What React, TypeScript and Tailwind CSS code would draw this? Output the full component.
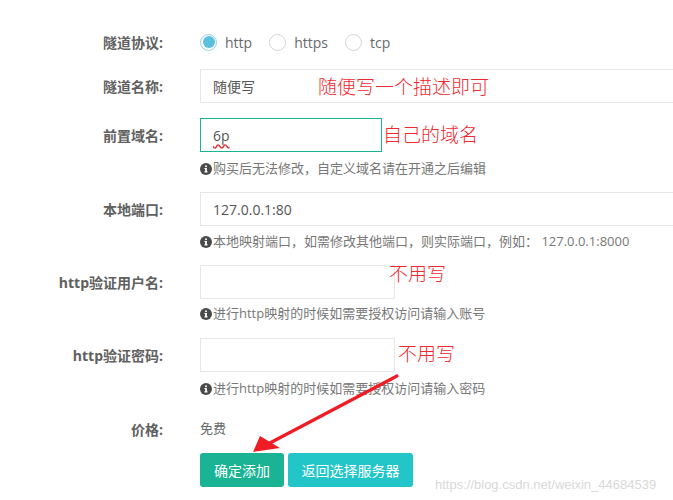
import React from "react";

const font = { fontFamily: '"Open Sans", "Noto Sans CJK SC", sans-serif' };

const InfoIcon = () => (
    <svg width="12" height="12" viewBox="0 0 12 12" className="inline-block mr-[1px] -mt-[2px] align-middle">
        <circle cx="6" cy="6" r="6" fill="#4a4a4a" />
        <rect x="5.1" y="5" width="1.8" height="4.2" fill="#fff" />
        <rect x="4.3" y="8.4" width="3.4" height="1" fill="#fff" />
        <rect x="4.3" y="5" width="1.6" height="0.9" fill="#fff" />
        <circle cx="6" cy="3.2" r="1" fill="#fff" />
    </svg>
);

const Radio = ({checked, label}: {checked?: boolean; label: string}) => (
    <label className="flex items-center mr-[17px]">
        {checked ? (
            <span className="w-[17px] h-[17px] rounded-full border border-[#8fd3ea] flex items-center justify-center">
                <span className="w-[12px] h-[12px] rounded-full bg-[#5bc0de]" />
            </span>
        ) : (
            <span className="w-[17px] h-[17px] rounded-full border border-[#d5d5d5] bg-white" />
        )}
        <span className="ml-[8px] text-[14px] text-[#676a6c]">{label}</span>
    </label>
);

const Label = ({children}: {children: React.ReactNode}) => (
    <div className="w-[200px] shrink-0 pr-[37px] text-right text-[14px] font-bold text-[#606060]">
        {children}
    </div>
);

const Help = ({children, className}: {children: React.ReactNode; className: string}) => (
    <div className={"text-[13px] leading-[20px] text-[#777] " + className}>
        <InfoIcon />
        {children}
    </div>
);

const Note = ({children, className}: {children: React.ReactNode; className: string}) => (
    <span
        className={"absolute text-[19px] leading-[20px] text-[#f0282f] whitespace-nowrap " + className}
        style={{fontFamily: '"Noto Sans CJK SC", sans-serif', fontWeight: 300}}
    >
        {children}
    </span>
);

export default function App() {
    return (
        <div className="relative w-[673px] h-[500px] overflow-hidden bg-white pt-[27px]" style={font}>
            {/* 隧道协议 */}
            <div className="flex items-center h-[30px] mb-[12px]">
                <Label>隧道协议:</Label>
                <div className="flex items-center">
                    <Radio checked label="http" />
                    <Radio label="https" />
                    <Radio label="tcp" />
                </div>
            </div>

            {/* 隧道名称 */}
            <div className="flex items-center mb-[15px]">
                <Label>隧道名称:</Label>
                <div className="relative flex-1">
                    <div className="h-[34px] w-[500px] border border-[#e5e6e7] px-[12px] flex items-center text-[14px] text-[#555]">
                        随便写
                    </div>
                    <Note className="left-[118px] top-[7px]">随便写一个描述即可</Note>
                </div>
            </div>

            {/* 前置域名 */}
            <div className="flex mb-[14px]">
                <div className="h-[34px] flex items-center">
                    <Label>前置域名:</Label>
                </div>
                <div className="relative flex-1">
                    <div className="h-[34px] w-[182px] border border-[#1ab394] px-[12px] flex items-center text-[14px] text-[#555]">
                        <span className="underline decoration-wavy decoration-[#e0302f] underline-offset-[3px]">6p</span>
                    </div>
                    <Note className="left-[183px] top-[6px]">自己的域名</Note>
                    <Help className="mt-[6px]">购买后无法修改，自定义域名请在开通之后编辑</Help>
                </div>
            </div>

            {/* 本地端口 */}
            <div className="flex mb-[14px]">
                <div className="h-[34px] flex items-center">
                    <Label>本地端口:</Label>
                </div>
                <div className="flex-1">
                    <div className="h-[34px] w-[500px] border border-[#e5e6e7] px-[12px] flex items-center text-[14px] text-[#555]">
                        127.0.0.1:80
                    </div>
                    <Help className="mt-[5px]">本地映射端口，如需修改其他端口，则实际端口，例如： 127.0.0.1:8000</Help>
                </div>
            </div>

            {/* http验证用户名 */}
            <div className="flex mb-[15px]">
                <div className="h-[34px] flex items-center">
                    <Label>http验证用户名:</Label>
                </div>
                <div className="relative flex-1">
                    <div className="h-[34px] w-[195px] border border-[#e5e6e7]" />
                    <Note className="left-[189px] top-[-2px]">不用写</Note>
                    <Help className="mt-[4px]">进行http映射的时候如需要授权访问请输入账号</Help>
                </div>
            </div>

            {/* http验证密码 */}
            <div className="flex mb-[21px]">
                <div className="h-[34px] flex items-center">
                    <Label>http验证密码:</Label>
                </div>
                <div className="relative flex-1">
                    <div className="h-[34px] w-[195px] border border-[#e5e6e7]" />
                    <Note className="left-[198px] top-[5px]">不用写</Note>
                    <Help className="mt-[6px]">进行http映射的时候如需要授权访问请输入密码</Help>
                </div>
            </div>

            {/* 价格 */}
            <div className="flex items-center h-[20px] mb-[14px]">
                <Label>价格:</Label>
                <span className="text-[13px] text-[#676a6c]">免费</span>
            </div>

            {/* 按钮 */}
            <div className="flex pl-[200px] gap-[4px]">
                <button className="h-[34px] px-[12px] w-[84px] rounded-[3px] bg-[#1ab394] text-white text-[14px]">确定添加</button>
                <button className="h-[34px] px-[12px] w-[125px] rounded-[3px] bg-[#23c6c8] text-white text-[14px]">返回选择服务器</button>
            </div>

            {/* 红色箭头 */}
            <svg className="absolute left-0 top-0 pointer-events-none" width="673" height="500">
                <line x1="397" y1="376" x2="268" y2="444" stroke="#ee1c25" strokeWidth="3.2" strokeLinecap="round" />
                <polygon points="253,452 260,436 280,448" fill="#ee1c25" />
            </svg>

            <span
                className="absolute left-[435px] top-[475px] text-[13px] text-[#d9d9d9] whitespace-nowrap"
                style={{fontFamily: '"Liberation Sans", sans-serif'}}
            >
                https://blog.csdn.net/weixin_44684539
            </span>
        </div>
    );
}
